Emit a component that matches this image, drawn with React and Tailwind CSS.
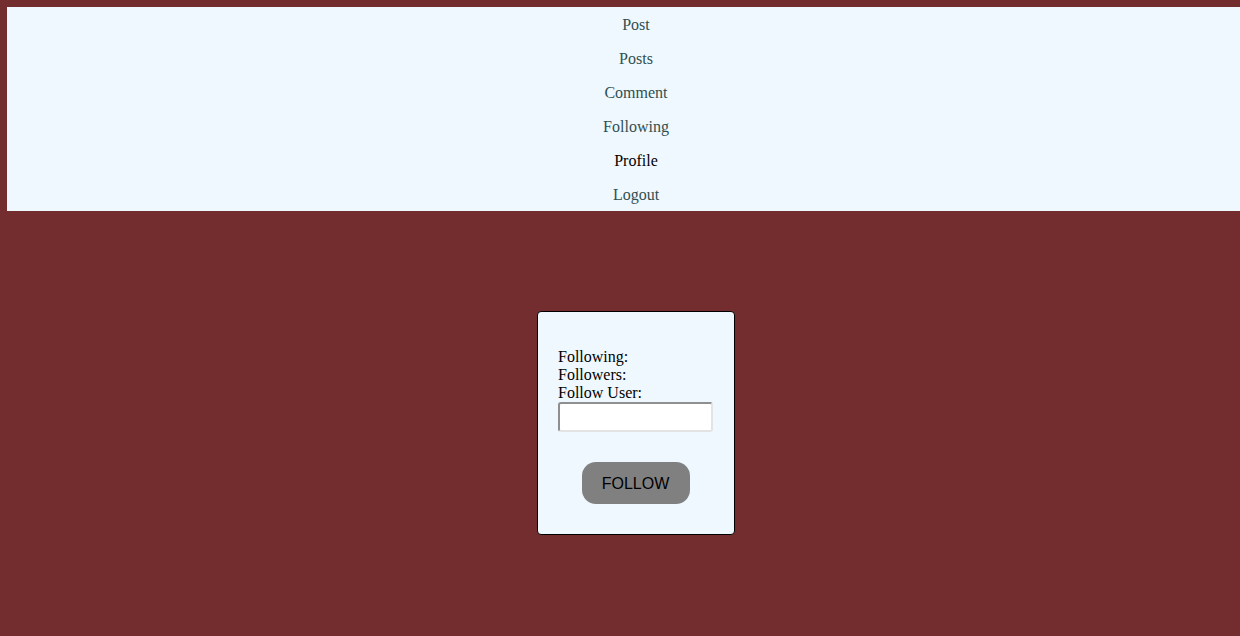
export default function App() {
  const items = ["Post", "Posts", "Comment", "Following", "Profile", "Logout"];
  return (
    <div className="min-h-[636px] w-full overflow-hidden bg-[#732d2e]" style={{ fontFamily: '"Liberation Serif", serif' }}>
      <div className="w-[1265px] pl-[7px] pt-[7px]">
        <nav className="flex flex-col bg-[#f0f8ff]">
          {items.map((t) => (
            <a
              key={t}
              className={`flex h-[34px] items-center justify-center pt-[2px] text-[16px] leading-[18px] ${t === "Profile" ? "text-black" : "text-[#2f4f4f]"}`}
            >
              {t}
            </a>
          ))}
        </nav>
        <div className="flex justify-center pt-[100px]">
          <div className="flex w-[198px] flex-col rounded-[4px] border border-black bg-[#f0f8ff] pl-[20px] pr-[21px] pt-[36px] pb-[30px] text-[16px] leading-[18px] text-black">
            <div>Following:</div>
            <div>Followers:</div>
            <div>Follow User:</div>
            <input
              type="text"
              className="h-[30px] w-[155px] rounded-[3px] border-2 border-t-[#8f8f8f] border-l-[#8f8f8f] border-b-[#e3e3e3] border-r-[#e3e3e3] bg-white px-1 outline-none"
            />
            <div className="flex justify-center pt-[30px]">
              <button
                className="h-[42px] w-[108px] rounded-[14px] bg-[#808080] pt-[2px] text-[16px] text-black"
                style={{ fontFamily: '"Liberation Sans", Arial, sans-serif' }}
              >
                FOLLOW
              </button>
            </div>
          </div>
        </div>
      </div>
    </div>
  );
}
